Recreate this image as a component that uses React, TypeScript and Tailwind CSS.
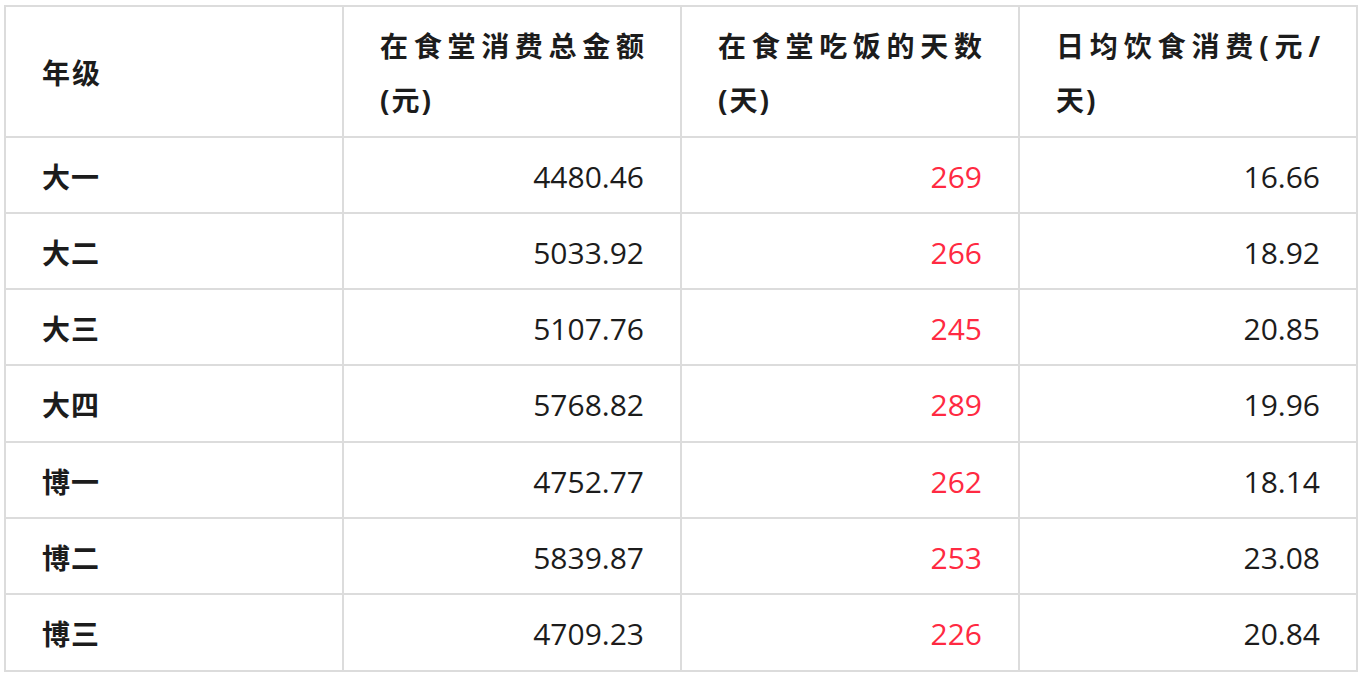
const rows = [
  { grade: '大一', total: '4480.46', days: '269', avg: '16.66' },
  { grade: '大二', total: '5033.92', days: '266', avg: '18.92' },
  { grade: '大三', total: '5107.76', days: '245', avg: '20.85' },
  { grade: '大四', total: '5768.82', days: '289', avg: '19.96' },
  { grade: '博一', total: '4752.77', days: '262', avg: '18.14' },
  { grade: '博二', total: '5839.87', days: '253', avg: '23.08' },
  { grade: '博三', total: '4709.23', days: '226', avg: '20.84' },
];

const headers: [string, string][] = [
  ['在食堂消费总金额', '(元)'],
  ['在食堂吃饭的天数', '(天)'],
  ['日均饮食消费(元/', '天)'],
];

const cell = 'border-2 border-[#dcdcdc] px-[36px] pt-[12px] pb-[8px] leading-[54.3px]';

export default function App() {
  return (
    <div
      className="min-h-screen bg-white pl-[4px] pt-[5px] text-[#1c1c1c]"
      style={{ fontFamily: '"Open Sans", "Noto Sans CJK SC", sans-serif' }}
    >
      <table className="w-[1354px] table-fixed border-collapse">
        <thead>
          <tr>
            <th className={`${cell} text-left text-[28px] font-bold tracking-[2px]`}>年级</th>
            {headers.map(([a, b]) => (
              <th key={a} className={`${cell} text-left text-[28px] font-bold tracking-[2px]`}>
                <div className="text-justify [text-align-last:justify] tracking-normal">{a}</div>
                <div>{b}</div>
              </th>
            ))}
          </tr>
        </thead>
        <tbody>
          {rows.map((r) => (
            <tr key={r.grade}>
              <td className={`${cell} text-left text-[28px] font-bold tracking-[1px]`}>{r.grade}</td>
              <td className={`${cell} text-right text-[30px]`}>{r.total}</td>
              <td className={`${cell} text-right text-[30px] text-[#ff2a42]`}>{r.days}</td>
              <td className={`${cell} text-right text-[30px]`}>{r.avg}</td>
            </tr>
          ))}
        </tbody>
      </table>
    </div>
  );
}
